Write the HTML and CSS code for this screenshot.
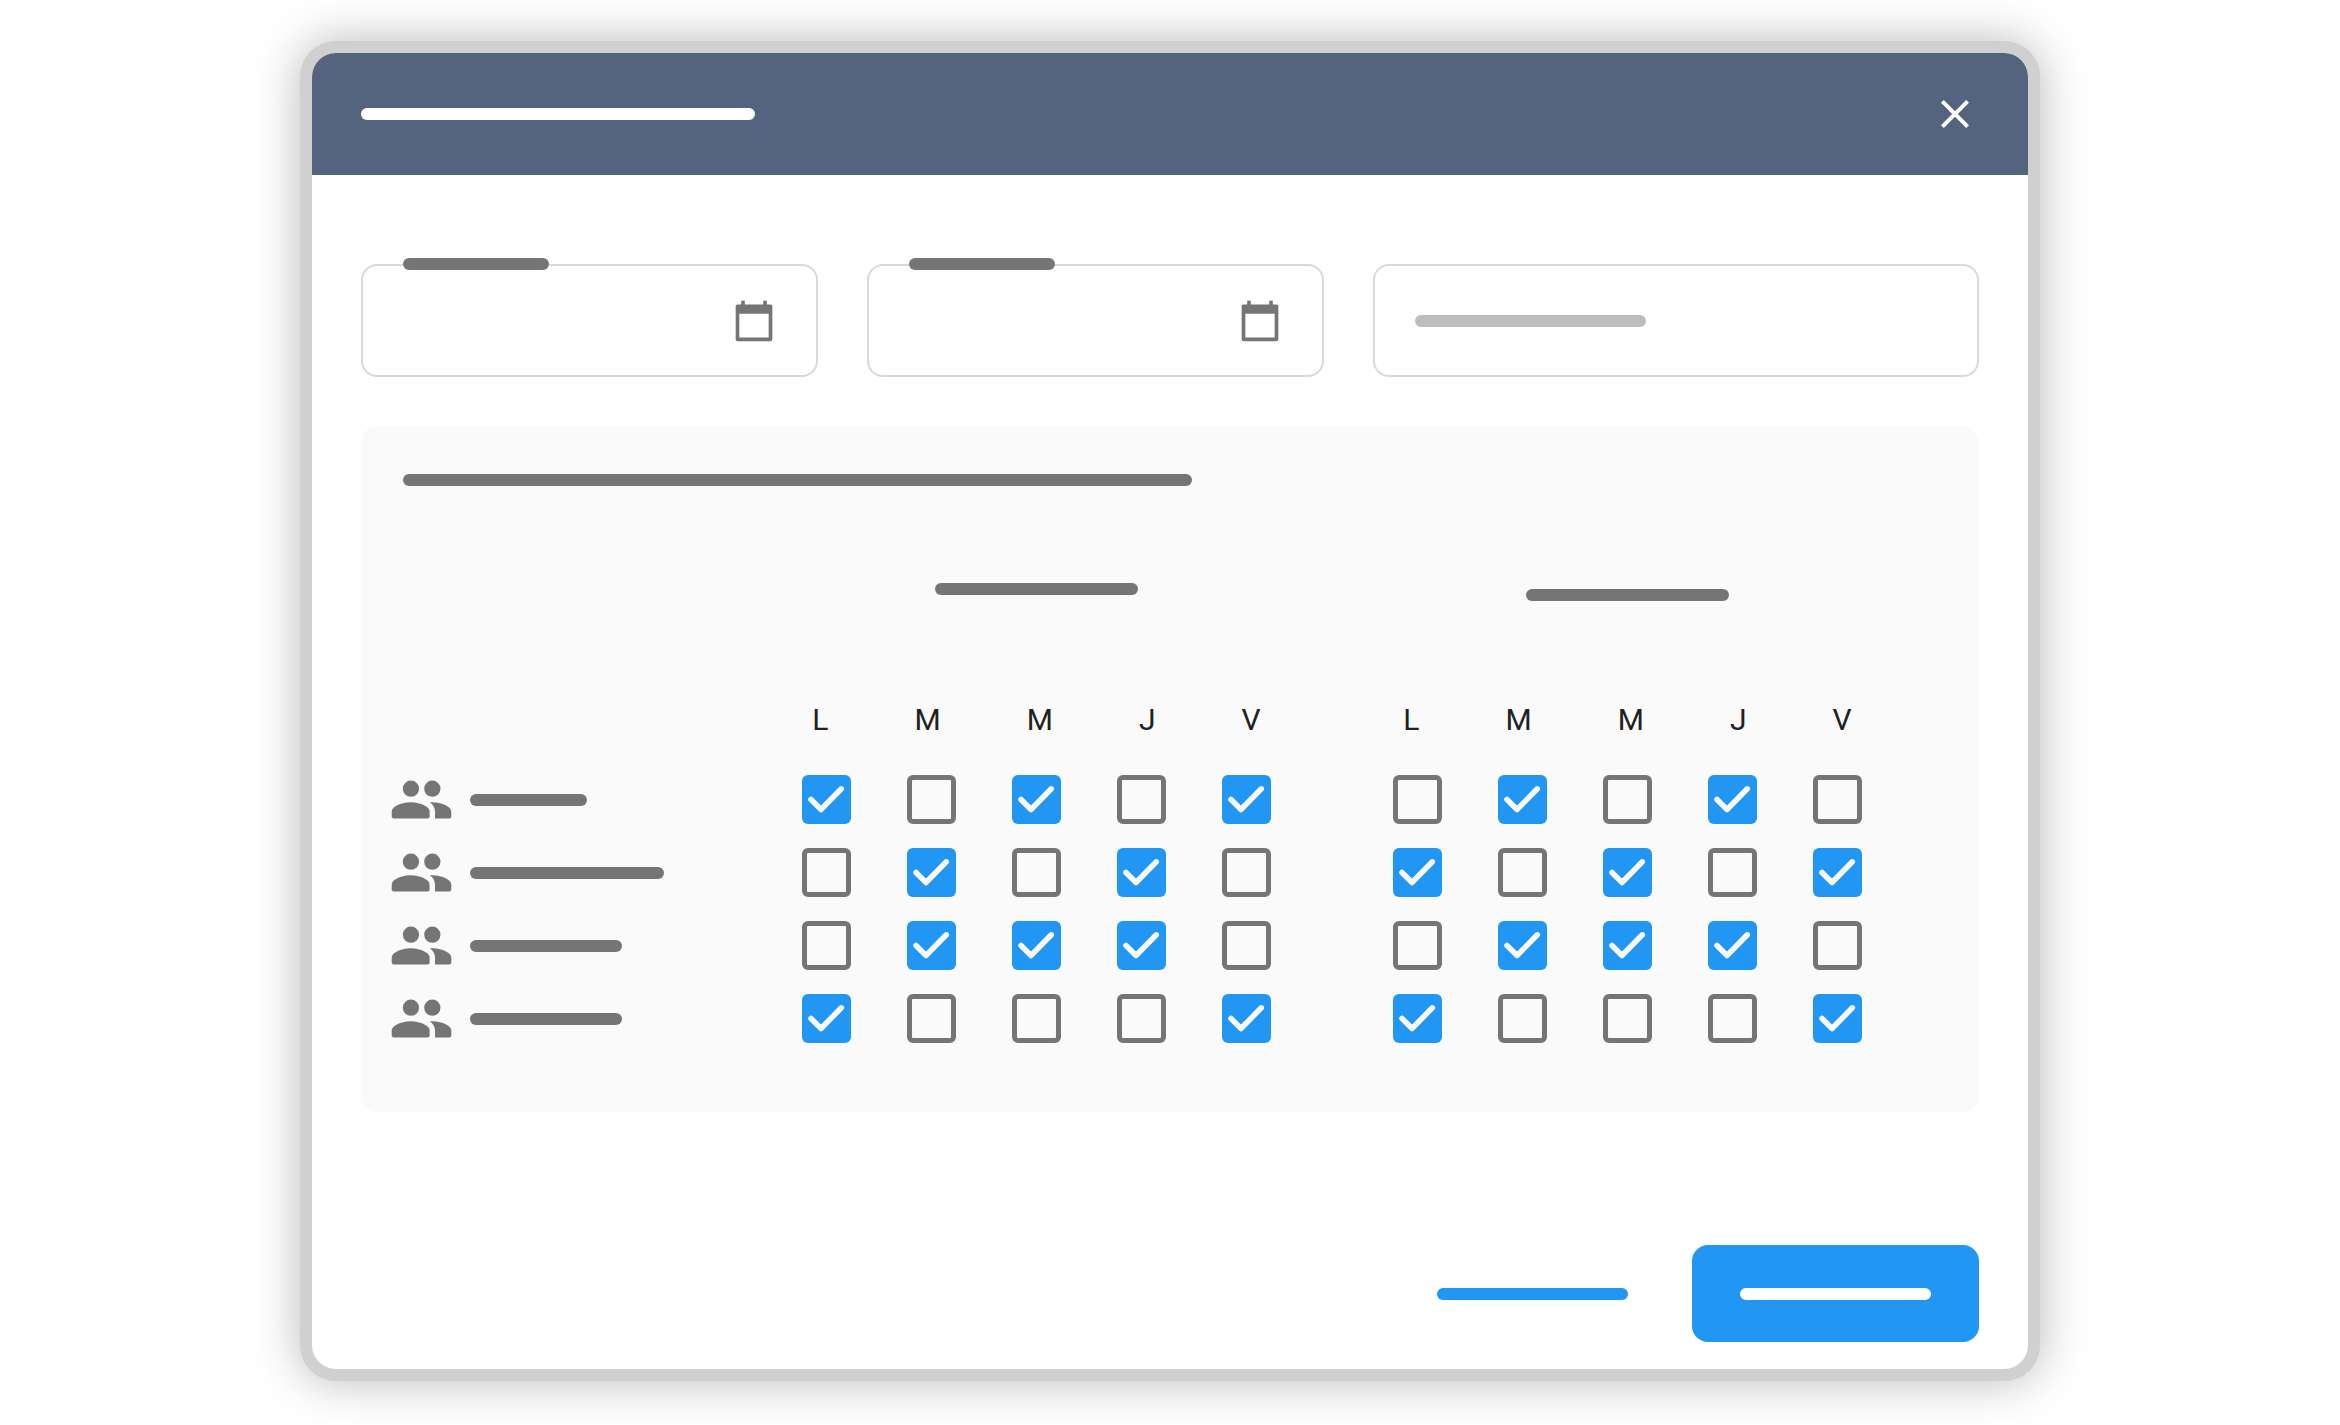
FILE: index.html
```html
<!DOCTYPE html>
<html lang="fr">
<head>
<meta charset="utf-8">
<meta name="viewport" content="width=device-width, initial-scale=1">
<title>Planning</title>
<link rel="stylesheet" href="styles.css">
</head>
<body>
<svg class="sprite" aria-hidden="true">
  <symbol id="calendar" viewBox="0 0 24 24"><path d="M21 3h-2V1h-2v2H7V1H5v2H3c-.6 0-1 .4-1 1v18c0 .6.4 1 1 1h18c.6 0 1-.4 1-1V4c0-.6-.4-1-1-1zm-1 18H4V8h16v13z"/></symbol>
  <symbol id="people" viewBox="0 0 24 24"><circle cx="8.1" cy="8" r="3"/><circle cx="16" cy="8" r="3"/><path d="M8 13c-2.33 0-7 1.17-7 3.5v1.8c0 .4.3.7.7.7h12.6c.4 0 .7-.3.7-.7v-1.8C15 14.17 10.33 13 8 13z"/><path d="M16 13c-.29 0-.62.02-.97.05 1.16.84 1.97 1.97 1.97 3.45V19h5.3c.4 0 .7-.3.7-.7v-1.8c0-2.33-4.67-3.5-7-3.5z"/></symbol>
</svg>
<main class="dialog">
  <header class="dialog-header">
    <span class="bar bar-title"></span>
    <button class="close" type="button" aria-label="Fermer">
      <svg viewBox="0 0 24 24"><path d="M19 6.41 17.59 5 12 10.59 6.41 5 5 6.41 10.59 12 5 17.59 6.41 19 12 13.41 17.59 19 19 17.59 13.41 12z"/></svg>
    </button>
  </header>
  <form class="dialog-body">
    <div class="fields">
      <div class="field">
        <label class="field-label" for="start" aria-label="Date de début"><span class="bar"></span></label>
        <input class="field-input" id="start" type="text">
        <svg class="icon-calendar" aria-hidden="true"><use href="#calendar"/></svg>
      </div>
      <div class="field">
        <label class="field-label" for="end" aria-label="Date de fin"><span class="bar"></span></label>
        <input class="field-input" id="end" type="text">
        <svg class="icon-calendar" aria-hidden="true"><use href="#calendar"/></svg>
      </div>
      <div class="field">
        <label class="field-placeholder" for="name" aria-label="Nom"><span class="bar"></span></label>
        <input class="field-input" id="name" type="text">
      </div>
    </div>
    <section class="panel">
      <span class="bar bar-heading"></span>
      <table class="schedule">
        <colgroup><col><col class="day" span="5"><col class="spacer"><col class="day" span="5"></colgroup>
        <thead>
          <tr class="groups">
            <td></td>
            <th class="group-first" colspan="5" scope="colgroup"><span class="bar"></span></th>
            <td></td>
            <th class="group-second" colspan="5" scope="colgroup"><span class="bar"></span></th>
          </tr>
          <tr>
            <td></td>
            <th class="days" colspan="5"><div class="letters"><span>L</span><span>M</span><span>M</span><span>J</span><span>V</span></div></th>
            <td></td>
            <th class="days" colspan="5"><div class="letters"><span>L</span><span>M</span><span>M</span><span>J</span><span>V</span></div></th>
          </tr>
        </thead>
        <tbody>
          <tr>
            <th scope="row"><div class="team"><svg class="icon-people" aria-hidden="true"><use href="#people"/></svg><span class="bar bar-short"></span></div></th>
            <td><input type="checkbox" aria-label="Lundi" checked></td>
            <td><input type="checkbox" aria-label="Mardi"></td>
            <td><input type="checkbox" aria-label="Mercredi" checked></td>
            <td><input type="checkbox" aria-label="Jeudi"></td>
            <td><input type="checkbox" aria-label="Vendredi" checked></td>
            <td></td>
            <td><input type="checkbox" aria-label="Lundi"></td>
            <td><input type="checkbox" aria-label="Mardi" checked></td>
            <td><input type="checkbox" aria-label="Mercredi"></td>
            <td><input type="checkbox" aria-label="Jeudi" checked></td>
            <td><input type="checkbox" aria-label="Vendredi"></td>
          </tr>
          <tr>
            <th scope="row"><div class="team"><svg class="icon-people" aria-hidden="true"><use href="#people"/></svg><span class="bar bar-long"></span></div></th>
            <td><input type="checkbox" aria-label="Lundi"></td>
            <td><input type="checkbox" aria-label="Mardi" checked></td>
            <td><input type="checkbox" aria-label="Mercredi"></td>
            <td><input type="checkbox" aria-label="Jeudi" checked></td>
            <td><input type="checkbox" aria-label="Vendredi"></td>
            <td></td>
            <td><input type="checkbox" aria-label="Lundi" checked></td>
            <td><input type="checkbox" aria-label="Mardi"></td>
            <td><input type="checkbox" aria-label="Mercredi" checked></td>
            <td><input type="checkbox" aria-label="Jeudi"></td>
            <td><input type="checkbox" aria-label="Vendredi" checked></td>
          </tr>
          <tr>
            <th scope="row"><div class="team"><svg class="icon-people" aria-hidden="true"><use href="#people"/></svg><span class="bar bar-medium"></span></div></th>
            <td><input type="checkbox" aria-label="Lundi"></td>
            <td><input type="checkbox" aria-label="Mardi" checked></td>
            <td><input type="checkbox" aria-label="Mercredi" checked></td>
            <td><input type="checkbox" aria-label="Jeudi" checked></td>
            <td><input type="checkbox" aria-label="Vendredi"></td>
            <td></td>
            <td><input type="checkbox" aria-label="Lundi"></td>
            <td><input type="checkbox" aria-label="Mardi" checked></td>
            <td><input type="checkbox" aria-label="Mercredi" checked></td>
            <td><input type="checkbox" aria-label="Jeudi" checked></td>
            <td><input type="checkbox" aria-label="Vendredi"></td>
          </tr>
          <tr>
            <th scope="row"><div class="team"><svg class="icon-people" aria-hidden="true"><use href="#people"/></svg><span class="bar bar-medium"></span></div></th>
            <td><input type="checkbox" aria-label="Lundi" checked></td>
            <td><input type="checkbox" aria-label="Mardi"></td>
            <td><input type="checkbox" aria-label="Mercredi"></td>
            <td><input type="checkbox" aria-label="Jeudi"></td>
            <td><input type="checkbox" aria-label="Vendredi" checked></td>
            <td></td>
            <td><input type="checkbox" aria-label="Lundi" checked></td>
            <td><input type="checkbox" aria-label="Mardi"></td>
            <td><input type="checkbox" aria-label="Mercredi"></td>
            <td><input type="checkbox" aria-label="Jeudi"></td>
            <td><input type="checkbox" aria-label="Vendredi" checked></td>
          </tr>
        </tbody>
      </table>
    </section>
    <footer class="actions">
      <button class="button button-text" type="button" aria-label="Annuler"><span class="bar"></span></button>
      <button class="button button-primary" type="submit" aria-label="Enregistrer"><span class="bar"></span></button>
    </footer>
  </form>
</main>
</body>
</html>
```
FILE: styles.css
```css
:root {
  --grey: #757575;
  --blue: #2196f3;
  --line: #d9d9d9;
}

* { box-sizing: border-box; }

body {
  margin: 0;
  padding: 41px 48px 44px;
  background: #fff;
  color: #212121;
  font-family: Roboto, "Liberation Sans", sans-serif;
}

button {
  border: 0;
  background: none;
  cursor: pointer;
}

.sprite { display: none; }

svg { fill: currentColor; }

.bar {
  display: block;
  height: 12px;
  border-radius: 6px;
  background: currentColor;
}

.dialog {
  max-width: 1740px;
  margin: 0 auto;
  border: 12px solid #d0d0d0;
  border-radius: 36px;
  background: #fff;
  box-shadow: 0 0 48px rgba(0, 0, 0, 0.28);
}

.dialog-header {
  display: flex;
  align-items: center;
  justify-content: space-between;
  height: 122px;
  padding: 0 49px;
  border-radius: 24px 24px 0 0;
  background: #55647e;
  color: #fff;
}

.bar-title { width: 394px; }

.close {
  width: 48px;
  height: 48px;
  padding: 0;
  color: inherit;
}

.close svg { display: block; }

.dialog-body { padding: 89px 49px 27px; }

.fields {
  display: grid;
  grid-template-columns: minmax(0, 457fr) minmax(0, 457fr) minmax(0, 606fr);
  gap: 49px;
}

.field {
  position: relative;
  display: flex;
  align-items: center;
  height: 113px;
  padding: 0 40px;
  border: 2px solid var(--line);
  border-radius: 16px;
  color: var(--grey);
}

.field-input {
  flex: 1;
  min-width: 0;
  height: 48px;
  padding: 0;
  border: 0;
  outline: 0;
  background: none;
  font: inherit;
  font-size: 30px;
}

.field-label {
  position: absolute;
  top: -8px;
  left: 40px;
  width: 146px;
}

.field-placeholder {
  width: 231px;
  color: #bdbdbd;
}

.icon-calendar {
  width: 44px;
  height: 44px;
}

.panel {
  margin-top: 49px;
  padding: 48px 89px 57px 30px;
  border-radius: 16px;
  background: #fafafa;
}

.bar-heading {
  width: 789px;
  margin: 0 0 97px 12px;
  color: var(--grey);
}

.schedule {
  width: 100%;
  table-layout: fixed;
  border-collapse: collapse;
}

.schedule th,
.schedule td {
  padding: 0;
  font-weight: 400;
  text-align: center;
}

.day { width: 105px; }
.spacer { width: 66px; }

.groups { height: 24px; color: var(--grey); }

.groups .bar {
  width: 203px;
  margin: 0 auto;
}

.schedule .group-first { vertical-align: top; }
.schedule .group-second { vertical-align: middle; }

.schedule .days { padding: 95px 0 25px; }

.letters {
  display: flex;
  justify-content: center;
  gap: 86px;
  font-size: 30px;
  line-height: 36px;
}

tbody tr { height: 73px; }

.team {
  display: flex;
  align-items: center;
  gap: 16px;
  color: var(--grey);
}

.icon-people {
  width: 65px;
  height: 65px;
  margin-left: -2px;
}

.bar-short { width: 117px; }
.bar-medium { width: 152px; }
.bar-long { width: 194px; }

input[type="checkbox"] {
  display: block;
  width: 49px;
  height: 49px;
  margin: 0 auto;
  appearance: none;
  border: 5px solid var(--grey);
  border-radius: 6px;
}

input[type="checkbox"]:checked {
  border: 0;
  background: var(--blue) url("data:image/svg+xml,%3Csvg xmlns='http://www.w3.org/2000/svg' viewBox='0 0 49 49'%3E%3Cpath d='M9 24.5l10 10 20.3-20.7' fill='none' stroke='%23fafafa' stroke-width='5.5' stroke-linecap='round' stroke-linejoin='round'/%3E%3C/svg%3E") center / 100%;
}

.actions {
  display: flex;
  justify-content: flex-end;
  gap: 16px;
  margin-top: 133px;
}

.button {
  height: 97px;
  padding: 0 48px;
  border-radius: 16px;
}

.button .bar { width: 191px; }

.button-text { color: var(--blue); }

.button-primary {
  background: var(--blue);
  color: #fff;
}
```
